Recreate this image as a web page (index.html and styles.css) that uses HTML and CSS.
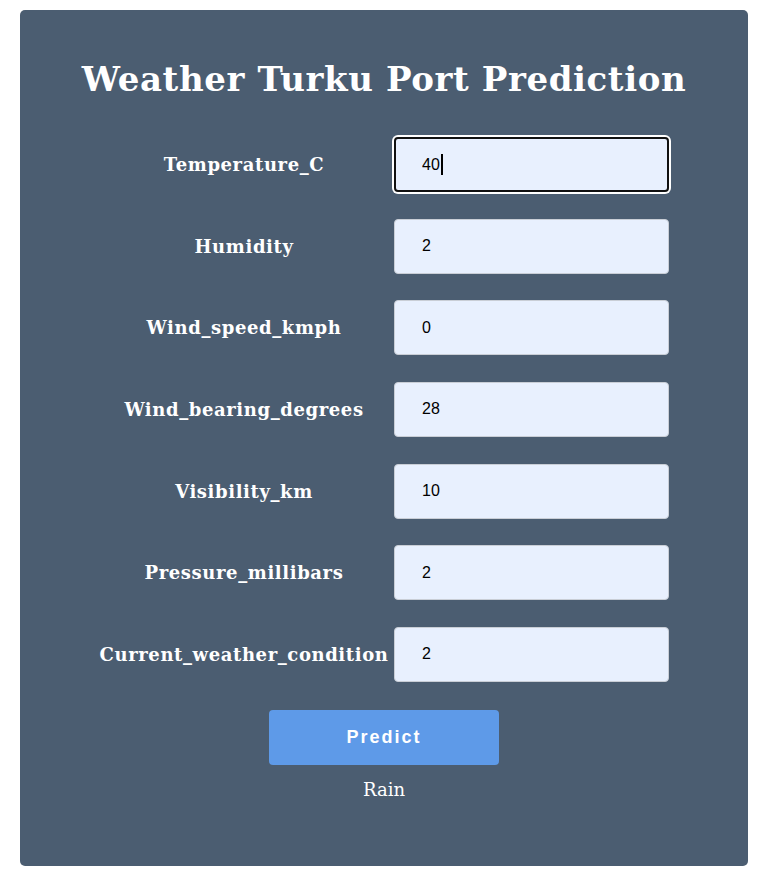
FILE: index.html
```html
<!DOCTYPE html>
<html lang="en">
<head>
<meta charset="utf-8">
<title>Weather Turku Port Prediction</title>
<link rel="stylesheet" href="styles.css">
</head>
<body>
<main class="card">
  <h1 class="title">Weather Turku Port Prediction</h1>
  <form class="form">
    <label class="label" for="t">Temperature_C</label>
    <span class="field">
      <input class="input focused" id="t" type="text" value="40">
      <span class="caret"></span>
    </span>
    <label class="label" for="h">Humidity</label>
    <input class="input" id="h" type="text" value="2">
    <label class="label" for="w">Wind_speed_kmph</label>
    <input class="input" id="w" type="text" value="0">
    <label class="label" for="b">Wind_bearing_degrees</label>
    <input class="input" id="b" type="text" value="28">
    <label class="label" for="v">Visibility_km</label>
    <input class="input" id="v" type="text" value="10">
    <label class="label" for="p">Pressure_millibars</label>
    <input class="input" id="p" type="text" value="2">
    <label class="label" for="c">Current_weather_condition</label>
    <input class="input" id="c" type="text" value="2">
  </form>
  <div class="actions">
    <button class="btn" type="button">Predict</button>
    <p class="result">Rain</p>
  </div>
</main>
</body>
</html>
```
FILE: styles.css
```css
html, body {
  margin: 0;
  padding: 0;
  background: #ffffff;
}
body {
  padding: 10px 15px 20px 20px;
  font-family: "DejaVu Serif", Georgia, serif;
}
.card {
  width: 728px;
  height: 856px;
  box-sizing: border-box;
  background: #4b5d71;
  border-radius: 5px;
  padding-top: 54px;
  color: #ffffff;
}
.title {
  margin: 0;
  text-align: center;
  font-size: 34px;
  line-height: 30px;
  font-weight: bold;
  letter-spacing: 0.6px;
}
.form {
  display: grid;
  grid-template-columns: 290px 275px;
  column-gap: 5px;
  row-gap: 26.67px;
  justify-content: center;
  align-items: center;
  margin-top: 43px;
}
.label {
  text-align: center;
  white-space: nowrap;
  font-size: 18px;
  font-weight: bold;
  letter-spacing: 0.6px;
}
.field {
  position: relative;
  display: block;
}
.input {
  display: block;
  width: 275px;
  height: 55px;
  box-sizing: border-box;
  border: 1px solid #c9ced6;
  border-radius: 4px;
  background: #e8f0fe;
  padding: 0 0 0 27px;
  font-family: "Liberation Sans", Arial, sans-serif;
  font-size: 16px;
  color: #000000;
  outline: none;
}
.input.focused {
  border: 2px solid #111111;
  padding-left: 26px;
  box-shadow: 0 0 0 2px #ffffff;
}
.caret {
  position: absolute;
  left: 47px;
  top: 17px;
  width: 2px;
  height: 21px;
  background: #000000;
}
.actions {
  display: flex;
  flex-direction: column;
  align-items: center;
  margin-top: 28px;
}
.btn {
  width: 230px;
  height: 55px;
  border: none;
  border-radius: 4px;
  background: #5e9ae8;
  color: #ffffff;
  font-family: "Liberation Sans", Arial, sans-serif;
  font-size: 18px;
  font-weight: bold;
  letter-spacing: 2px;
}
.result {
  margin: 15px 0 0;
  font-size: 18px;
  line-height: 20px;
}
```
